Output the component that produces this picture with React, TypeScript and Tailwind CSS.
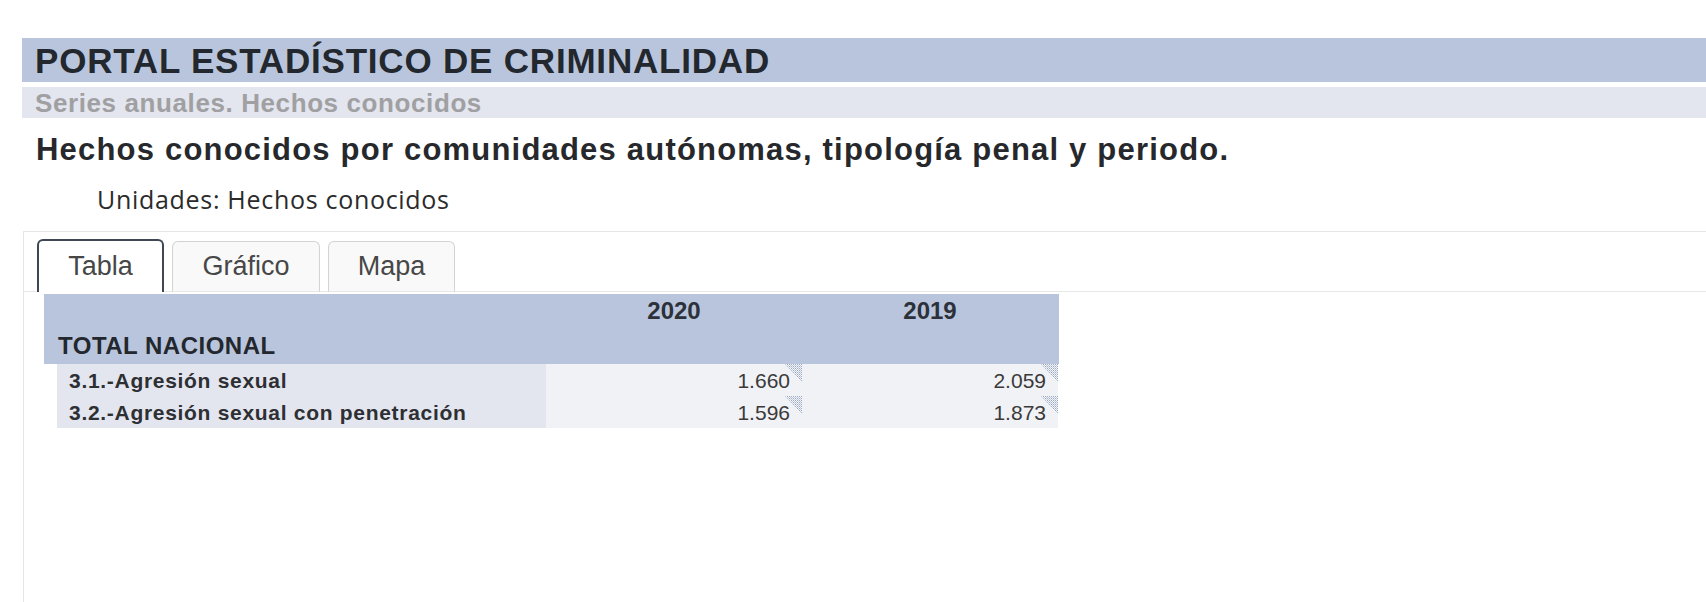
const rows = [
  { label: '3.1.-Agresión sexual', values: ['1.660', '2.059'] },
  { label: '3.2.-Agresión sexual con penetración', values: ['1.596', '1.873'] },
]

const years = ['2020', '2019']

function NoteCorner() {
  return (
    <svg className="absolute right-0 top-0" width="17" height="18" viewBox="0 0 17 18">
      <defs>
        <pattern id="dots" width="2" height="2" patternUnits="userSpaceOnUse">
          <rect width="1" height="1" fill="#9fadc4" />
          <rect x="1" y="1" width="1" height="1" fill="#c3cddd" />
        </pattern>
      </defs>
      <polygon points="0,0 17,0 17,18" fill="url(#dots)" />
    </svg>
  )
}

export default function App() {
  return (
    <div className="w-[1706px] h-[602px] overflow-hidden bg-white flex flex-col pt-[38px] pl-[22px] font-['Liberation_Sans',Arial,sans-serif]">
      <div className="h-[44px] bg-[#b9c5dc] flex items-center pl-[13px]">
        <h1 className="text-[35px] leading-none font-bold tracking-[0.8px] text-[#23272e]">
          PORTAL ESTADÍSTICO DE CRIMINALIDAD
        </h1>
      </div>
      <div className="mt-[5px] h-[31px] bg-[#e3e6ef] flex items-center pl-[13px]">
        <p className="text-[26px] leading-none font-bold tracking-[0.6px] text-[#a0a0a2]">
          Series anuales. Hechos conocidos
        </p>
      </div>

      <h2 className="mt-[16px] pl-[14px] text-[31px] leading-none font-bold tracking-[1.2px] text-[#26282c]">
        Hechos conocidos por comunidades autónomas, tipología penal y periodo.
      </h2>
      <p className="mt-[22px] pl-[75px] text-[25px] leading-none tracking-[0.7px] text-[#2b2b2b] font-['Open_Sans',sans-serif]">
        Unidades: Hechos conocidos
      </p>

      <div className="mt-[19px] ml-px flex-1 border-t border-l border-[#e6e6e6] pt-[7px]">
        <div className="flex items-end gap-[8px] pl-[13px] border-b border-[#e8e8e8] h-[53px]">
          <Tab label="Tabla" active width="w-[127px]" />
          <Tab label="Gráfico" width="w-[148px]" />
          <Tab label="Mapa" width="w-[127px]" />
        </div>

        <div className="mt-[2px] ml-[20px] w-[1015px]">
          <div className="bg-[#b9c5dc]">
            <div className="h-[34px] flex pl-[502px] items-center">
              {years.map((y) => (
                <div key={y} className="w-[256px] text-center text-[24px] leading-none font-bold text-[#2c313a]">
                  {y}
                </div>
              ))}
            </div>
            <div className="h-[36px] flex items-center pl-[14px]">
              <span className="text-[24px] leading-none font-bold tracking-[0.5px] text-[#23272e]">TOTAL NACIONAL</span>
            </div>
          </div>

          <div className="ml-[13px]">
            {rows.map((r) => (
              <div key={r.label} className="flex h-[32px]">
                <div className="w-[489px] bg-[#e3e6ef] flex items-center pl-[12px]">
                  <span className="text-[21px] leading-none font-bold tracking-[0.7px] text-[#2e2f33]">{r.label}</span>
                </div>
                {r.values.map((v, i) => (
                  <div
                    key={i}
                    className="relative w-[256px] bg-[#f1f2f6] flex items-center justify-end pr-[12px]"
                  >
                    <span className="text-[21px] leading-none text-[#3a3a3a]">{v}</span>
                    <NoteCorner />
                  </div>
                ))}
              </div>
            ))}
          </div>
        </div>
      </div>
    </div>
  )
}

function Tab({ label, active, width }: { label: string; active?: boolean; width: string }) {
  return (
    <div
      className={
        active
          ? `${width} h-[53px] -mb-px flex items-center justify-center rounded-t-[6px] border-2 border-b-0 border-[#3e4752] bg-white`
          : `${width} h-[51px] -mb-px flex items-center justify-center rounded-t-[6px] border border-[#d3d3d3] border-b-[#e8e8e8] bg-[#f9f9f9]`
      }
    >
      <span className="text-[27px] leading-none text-[#474747]">{label}</span>
    </div>
  )
}
